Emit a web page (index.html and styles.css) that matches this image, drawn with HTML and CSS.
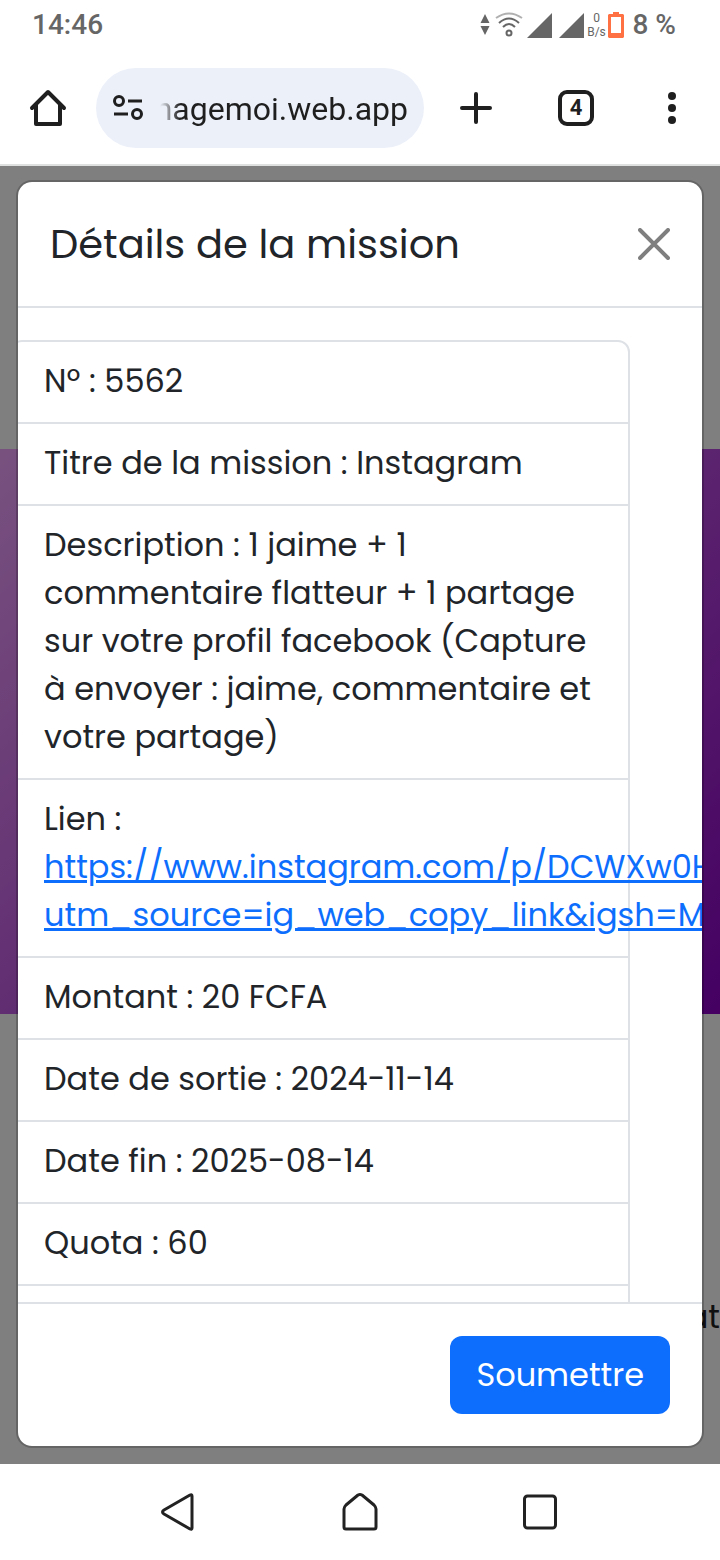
FILE: index.html
```html
<!DOCTYPE html>
<html lang="fr">
  <head>
    <meta charset="utf-8" />
    <meta name="viewport" content="width=device-width, initial-scale=1" />
    <title>Détails de la mission</title>

    <link rel="stylesheet" href="styles.css">
  </head>

  <body>
    <header>
      <div class="status-bar">
        <span class="clock">14:46</span>
        <div class="status-icons">
          <svg width="10" height="22" viewBox="0 0 10 22" fill="#666"><path d="M5 0l4.500 9h-9zM5 21l4.500-9h-9z" /></svg>
          <svg class="wifi" width="28" height="26" viewBox="0 0 28 26" fill="none" stroke="#666" stroke-width="2">
            <path d="M1 6Q14-3 27 6" stroke="#b0b0b0" />
            <path d="M4 11Q14 2 24 11M8 15Q14 9 20 15" />
            <circle cx="14" cy="21" r="2.500" />
          </svg>
          <svg class="signal" width="25" height="25" viewBox="0 0 25 25" fill="#666"><path d="M0 25L25 0v25z" /></svg>
          <svg class="signal" width="25" height="25" viewBox="0 0 25 25" fill="#666"><path d="M0 25L25 0v25z" /></svg>
          <span class="speed"><span>0</span><span>B/s</span></span>
          <svg width="16" height="26" viewBox="0 0 16 26" fill="#ff7043"><path fill-rule="evenodd" d="M5 0h6v2h4l1 1v22l-1 1H1l-1-1V3l1-1h4zM3 5v16h10V5z" /></svg>
          <span class="battery">8 %</span>
        </div>
      </div>

      <div class="toolbar">
        <button class="icon-button" aria-label="Accueil">
          <svg width="40" height="40" viewBox="0 0 40 40" fill="none" stroke="#1f1f1f" stroke-width="4" stroke-linejoin="round" stroke-linecap="round"><path d="M4 20L20 4l16 16M8 17v19h24V17" /></svg>
        </button>
        <div class="address">
          <svg class="site-info" width="32" height="26" viewBox="0 0 32 26" fill="none" stroke="#1f1f1f" stroke-width="3">
            <circle cx="7" cy="6" r="4.500" />
            <path d="M16 6h14M2 19h14" />
            <circle cx="25" cy="19" r="4.500" />
          </svg>
          <div class="url"><span>jemenagemoi.web.app</span></div>
        </div>
        <button class="icon-button" aria-label="Nouvel onglet">
          <svg width="32" height="32" viewBox="0 0 32 32" stroke="#1f1f1f" stroke-width="4" stroke-linecap="round"><path d="M16 2v28M2 16h28" /></svg>
        </button>
        <button class="icon-button" aria-label="Onglets"><span class="tab-count">4</span></button>
        <button class="icon-button" aria-label="Menu">
          <svg width="8" height="32" viewBox="0 0 8 32" fill="#1f1f1f"><circle cx="4" cy="4" r="4" /><circle cx="4" cy="16" r="4" /><circle cx="4" cy="28" r="4" /></svg>
        </button>
      </div>
    </header>

    <main>
      <div class="hero"></div>
      <p class="caption">at</p>

      <div class="backdrop">
        <div class="modal" role="dialog" aria-labelledby="modal-title">
          <div class="modal-header">
            <h1 id="modal-title">Détails de la mission</h1>
            <button class="close" aria-label="Fermer">
              <svg width="32" height="32" viewBox="0 0 32 32" stroke="#7f7f7f" stroke-width="4" stroke-linecap="round"><path d="M2 2l28 28M30 2L2 30" /></svg>
            </button>
          </div>

          <div class="modal-body">
            <ul class="list">
              <li>Nº : 5562</li>
              <li>Titre de la mission : Instagram</li>
              <li>Description : 1 jaime + 1 commentaire flatteur + 1 partage sur votre profil facebook (Capture à envoyer : jaime, commentaire et votre partage)</li>
              <li>Lien :<br><a href="#">https://www.instagram.com/p/DCWXw0H<br>utm_source=ig_web_copy_link&amp;igsh=M</a></li>
              <li>Montant : 20 FCFA</li>
              <li>Date de sortie : 2024-11-14</li>
              <li>Date fin : 2025-08-14</li>
              <li>Quota : 60</li>
              <li></li>
            </ul>
          </div>

          <div class="modal-footer">
            <button class="submit">Soumettre</button>
          </div>
        </div>
      </div>
    </main>

    <nav>
      <button class="icon-button" aria-label="Retour">
        <svg width="40" height="40" viewBox="0 0 40 40" fill="none" stroke="#222" stroke-width="3" stroke-linejoin="round"><path d="M30 3q2-1 2 1v32q0 2-2 1L4 22q-3-2 0-4z" /></svg>
      </button>
      <button class="icon-button" aria-label="Écran d'accueil">
        <svg width="40" height="40" viewBox="0 0 40 40" fill="none" stroke="#222" stroke-width="3" stroke-linejoin="round"><path d="M18 3q2-1 4 0l12 10q2 2 2 4v18q0 2-2 2H6q-2 0-2-2V17q0-2 2-4z" /></svg>
      </button>
      <button class="icon-button" aria-label="Applications récentes">
        <svg width="40" height="40" viewBox="0 0 40 40" fill="none" stroke="#222" stroke-width="3"><rect x="4.500" y="4" width="31" height="32" rx="3" /></svg>
      </button>
    </nav>
  </body>
</html>
```
FILE: styles.css
```css
* {
  box-sizing: border-box;
}

body {
  display: flex;
  flex-direction: column;
  height: 100vh;
  margin: 0;
  background: #fff;
  color: #212529;
  font-family: Poppins, Inter, 'Open Sans', sans-serif;
  font-size: 32px;
  line-height: 48px;
}

button {
  padding: 0;
  border: 0;
  background: none;
  font: inherit;
}

svg {
  display: block;
  flex-shrink: 0;
}

header {
  border-bottom: 2px solid #dfe1e1;
  font-family: Roboto, sans-serif;
}

.status-bar {
  display: flex;
  justify-content: space-between;
  align-items: center;
  height: 52px;
  padding: 0 44px 2px 32px;
  color: #666;
  font-size: 28px;
  font-weight: 500;
}

.status-icons {
  display: flex;
  align-items: center;
}

.wifi {
  margin: 0 4px 0 5px;
}

.signal + .signal {
  margin-left: 7px;
}

.speed {
  display: flex;
  flex-direction: column;
  align-items: center;
  width: 18px;
  margin: 0 2px 0 4px;
  font-size: 12px;
  font-weight: 400;
  line-height: 14px;
}

.battery {
  margin-left: 9px;
}

.toolbar {
  display: grid;
  grid-template-columns: 96px 1fr 104px 96px 96px;
  align-items: center;
  height: 112px;
}

.icon-button {
  display: flex;
  justify-content: center;
  align-items: center;
}

.address {
  display: flex;
  align-items: center;
  min-width: 0;
  height: 80px;
  padding: 0 16px;
  border-radius: 40px;
  background: #ecf0f9;
  color: #1f1f1f;
}

.url {
  display: flex;
  flex: 1;
  justify-content: flex-end;
  min-width: 0;
  margin-left: 16px;
  padding-top: 2px;
  overflow: hidden;
  white-space: nowrap;
  mask-image: linear-gradient(to right, transparent, #000 20px);
}

.tab-count {
  width: 36px;
  height: 36px;
  border: 4px solid #1f1f1f;
  border-radius: 9px;
  color: #1f1f1f;
  font-size: 22px;
  font-weight: 700;
  line-height: 28px;
}

main {
  position: relative;
  flex: 1;
  min-height: 0;
  padding-top: 283px;
  overflow: hidden;
}

.hero {
  height: 565px;
  background: linear-gradient(135deg, #f1a4ff, #8a00c4);
}

.caption {
  margin: 279px 0 0;
  color: #212121;
  text-align: right;
}

.backdrop {
  position: absolute;
  inset: 0;
  padding: 14px 16px 16px;
  background: rgba(0, 0, 0, 0.5);
}

.modal {
  display: flex;
  flex-direction: column;
  height: 100%;
  border: 2px solid rgba(0, 0, 0, 0.2);
  border-radius: 16px;
  background: #fff;
  background-clip: padding-box;
  overflow: hidden;
}

.modal-header {
  display: flex;
  justify-content: space-between;
  align-items: center;
  padding: 32px;
  border-bottom: 2px solid #dee2e6;
}

h1 {
  margin: 0;
  font-size: 40px;
  font-weight: 400;
  line-height: 60px;
}

.modal-body {
  flex: 1;
  min-height: 0;
  padding: 32px 72px 0 0;
  overflow: hidden;
}

/* the left border sits under the edge of the modal */
.list {
  margin: 0 0 0 -8px;
  padding: 0;
  border: 2px solid #dee2e6;
  border-radius: 12px;
  list-style: none;
}

.list li {
  min-height: 80px;
  padding: 15px 26px 17px 32px;
}

.list li + li {
  border-top: 2px solid #dee2e6;
}

.list a {
  color: #0d6efd;
  white-space: nowrap;
  text-decoration-thickness: 3px;
}

.modal-footer {
  display: flex;
  justify-content: flex-end;
  padding: 32px;
  border-top: 2px solid #dee2e6;
}

.submit {
  padding: 15px 26px;
  border-radius: 12px;
  background: #0d6efd;
  color: #fff;
}

nav {
  display: flex;
  justify-content: center;
  height: 96px;
}

nav .icon-button {
  width: 25%;
}
```
